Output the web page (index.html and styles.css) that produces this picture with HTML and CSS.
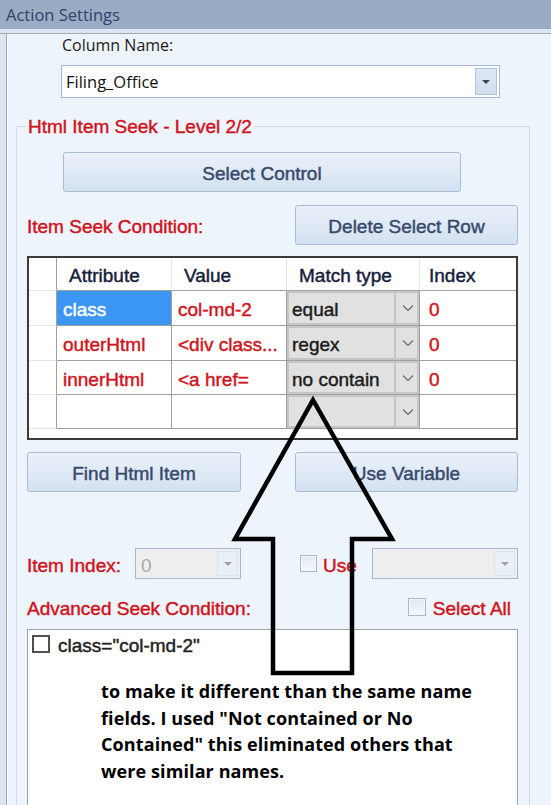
FILE: index.html
```html
<!DOCTYPE html>
<html>
<head>
<meta charset="utf-8">
<link rel="stylesheet" href="styles.css">
</head>
<body>
<div class="window">
  <div class="titlebar">Action Settings</div>
  <div class="titlesep"></div>
  <div class="frame">
    <div class="frame-edge"></div>
    <div class="content">
      <div class="field-label">Column Name:</div>
      <div class="combo">
        <div class="combo-text">Filing_Office</div>
        <div class="combo-btn"><span class="tri"></span></div>
      </div>

      <div class="group">
        <div class="legend-row"><span class="legend ui red">Html Item Seek - Level 2/2</span></div>

        <div class="btn ui select-btn">Select Control</div>

        <div class="seek-row">
          <div class="ui red lbl">Item Seek Condition:</div>
          <div class="btn ui del-btn">Delete Select Row</div>
        </div>

        <div class="grid ui">
          <div class="rh"></div>
          <div class="th">Attribute</div>
          <div class="th">Value</div>
          <div class="th">Match type</div>
          <div class="th last">Index</div>

          <div class="rh"></div>
          <div class="td sel">class</div>
          <div class="td">col-md-2</div>
          <div class="td mc"><span class="mc-text">equal</span><span class="mc-btn"><svg width="12" height="8" viewBox="0 0 12 8"><polyline points="1,1.5 6,6.5 11,1.5" fill="none" stroke="#6a6a6a" stroke-width="1.2"/></svg></span></div>
          <div class="td last">0</div>

          <div class="rh"></div>
          <div class="td">outerHtml</div>
          <div class="td">&lt;div class...</div>
          <div class="td mc"><span class="mc-text">regex</span><span class="mc-btn"><svg width="12" height="8" viewBox="0 0 12 8"><polyline points="1,1.5 6,6.5 11,1.5" fill="none" stroke="#6a6a6a" stroke-width="1.2"/></svg></span></div>
          <div class="td last">0</div>

          <div class="rh"></div>
          <div class="td">innerHtml</div>
          <div class="td">&lt;a href=</div>
          <div class="td mc"><span class="mc-text">no contain</span><span class="mc-btn"><svg width="12" height="8" viewBox="0 0 12 8"><polyline points="1,1.5 6,6.5 11,1.5" fill="none" stroke="#6a6a6a" stroke-width="1.2"/></svg></span></div>
          <div class="td last">0</div>

          <div class="rh"></div>
          <div class="td"></div>
          <div class="td"></div>
          <div class="td mc"><span class="mc-text"></span><span class="mc-btn"><svg width="12" height="8" viewBox="0 0 12 8"><polyline points="1,1.5 6,6.5 11,1.5" fill="none" stroke="#6a6a6a" stroke-width="1.2"/></svg></span></div>
          <div class="td last"></div>

          <div class="filler"></div>
        </div>

        <div class="btn-row">
          <div class="btn ui find-btn">Find Html Item</div>
          <div class="btn ui var-btn">Use Variable</div>
        </div>

        <div class="idx-row">
          <div class="ui red lbl idx-label">Item Index:</div>
          <div class="dcombo idx-combo">
            <span class="dcombo-text ui">0</span>
            <span class="dcombo-btn"><span class="tri gray"></span></span>
          </div>
          <span class="chk use-chk"></span>
          <span class="ui red lbl use-label">Use</span>
          <div class="dcombo var-combo">
            <span class="dcombo-text ui"></span>
            <span class="dcombo-btn"><span class="tri gray"></span></span>
          </div>
        </div>

        <div class="adv-row">
          <div class="ui red lbl">Advanced Seek Condition:</div>
          <div class="selall">
            <span class="chk"></span>
            <span class="ui red lbl">Select All</span>
          </div>
        </div>

        <div class="listbox">
          <div class="list-item">
            <span class="lchk"></span>
            <span class="ui lbl list-text">class="col-md-2"</span>
          </div>
        </div>
      </div>
    </div>
  </div>

  <svg class="arrow" width="551" height="805" viewBox="0 0 551 805">
    <polygon points="313,400 392,539 352,539 352,673 273,673 273,539 235,539" fill="none" stroke="#000" stroke-width="4.5" stroke-linejoin="miter"/>
  </svg>

  <div class="note">to make it different than the same name<br>fields. I used "Not contained or No<br>Contained" this eliminated others that<br>were similar names.</div>
</div>
</body>
</html>
```

FILE: styles.css
```css
* { box-sizing: border-box; }

body {
  margin: 0;
  background: #eef4fc;
  font-family: "Liberation Sans", Arial, sans-serif;
  overflow: hidden;
}

.window {
  position: relative;
  width: 551px;
  height: 805px;
  overflow: hidden;
  background: #eef4fc;
}

.titlebar {
  height: 29px;
  background: #9aabc4;
  color: #31436a;
  font-family: "Open Sans", sans-serif;
  font-size: 16.5px;
  line-height: 30px;
  padding-left: 6px;
}

.titlesep {
  height: 5px;
  background: #dbe6f3;
  border-bottom: 1px solid #a6a9a5;
}

.frame {
  display: flex;
  height: 771px;
}

.frame-edge {
  width: 7px;
  background: #dce6f2;
  border-right: 1px solid #a0a5ab;
}

.content {
  flex: 1;
  border-left: 1px solid #fbfdff;
  padding-top: 1px;
}

.ui {
  font-family: "Liberation Sans", Arial, sans-serif;
  font-size: 19px;
  -webkit-text-stroke: 0.45px currentColor;
}

.lbl { padding-top: 4px; }

.red { color: #d0141c; }

.field-label {
  margin-left: 54px;
  font-family: "Open Sans", sans-serif;
  font-size: 16px;
  line-height: 20px;
  color: #1b1b1b;
}

.combo {
  margin: 10px 0 0 53px;
  width: 439px;
  height: 33px;
  border: 1px solid #a7b8d2;
  background: #fff;
  display: flex;
  align-items: center;
  padding: 2px;
}

.combo-text {
  flex: 1;
  padding-left: 2px;
  font-family: "Open Sans", sans-serif;
  font-size: 16.5px;
  color: #111;
}

.combo-btn {
  width: 22px;
  height: 27px;
  background: linear-gradient(#dde7f4, #d2deee);
  border: 1px solid #b3c3da;
  display: flex;
  align-items: center;
  justify-content: center;
}

.tri {
  width: 0;
  height: 0;
  border-left: 4px solid transparent;
  border-right: 4px solid transparent;
  border-top: 4px solid #444;
  margin-top: 1px;
}

.tri.gray { border-top-color: #a0a0a0; }

.group {
  margin: 28px 0 0 8px;
  width: 514px;
  height: 700px;
  border: 1px solid #d6dae0;
  border-bottom: none;
  padding: 0 11px 0 10px;
}

.legend-row {
  height: 20px;
  margin-top: -11px;
  line-height: 22px;
}

.legend {
  background: #eef4fc;
  padding: 0 2px;
  margin-left: -1px;
}

.btn {
  height: 40px;
  border: 1px solid #a9bcd6;
  border-radius: 3px;
  background: linear-gradient(#ebf1fa, #d4e1f1);
  color: #384a6c;
  display: flex;
  align-items: center;
  justify-content: center;
  padding-top: 4px;
}

.select-btn {
  margin: 16px 0 0 36px;
  width: 398px;
}

.seek-row {
  display: flex;
  justify-content: space-between;
  align-items: center;
  margin-top: 13px;
}

.del-btn { width: 223px; }

.grid {
  margin-top: 11px;
  display: grid;
  grid-template-columns: 28px 115px 115px 133px 96px;
  grid-template-rows: 33px 35px 35px 34px 34px 9px;
  border: 2px solid #3a3a3a;
  background: #fff;
}

.rh {
  border-right: 1px solid #a0a0a0;
  border-bottom: 1px solid #e3e3e3;
}

.th {
  border-right: 1px solid #e3e3e3;
  border-bottom: 1px solid #a0a0a0;
  color: #15203a;
  padding: 4px 0 0 12px;
  display: flex;
  align-items: center;
}

.td {
  border-right: 1px solid #a0a0a0;
  border-bottom: 1px solid #a0a0a0;
  color: #d0141c;
  padding: 4px 0 0 6px;
  display: flex;
  align-items: center;
  white-space: nowrap;
  overflow: hidden;
}

.th.last, .td.last { border-right: none; padding-left: 9px; }

.td.sel {
  background: #3b97f3;
  color: #fff;
}

.td.mc {
  padding: 0;
  background: #e1e1e1;
  box-shadow: inset 0 0 0 2px #c6c6c6;
  color: #1c1c1c;
}

.mc-text {
  flex: 1;
  padding: 4px 0 0 5px;
}

.mc-btn {
  width: 25px;
  align-self: stretch;
  border-left: 2px solid #c6c6c6;
  display: flex;
  align-items: center;
  justify-content: center;
}

.filler { grid-column: 1 / -1; }

.btn-row {
  display: flex;
  justify-content: space-between;
  margin-top: 12px;
}

.find-btn { width: 214px; }
.var-btn { width: 223px; }

.idx-row {
  display: flex;
  align-items: center;
  margin-top: 56px;
  height: 31px;
}

.idx-label { width: 108px; }

.dcombo {
  height: 31px;
  border: 1px solid #a7b7cf;
  background: #efefef;
  display: flex;
  align-items: center;
  padding: 2px;
}

.dcombo-text {
  flex: 1;
  color: #a9a9a9;
  padding: 4px 0 0 3px;
  -webkit-text-stroke: 0;
}

.dcombo-btn {
  width: 21px;
  height: 25px;
  background: #eaf0f7;
  border: 1px solid #dbe3ee;
  display: flex;
  align-items: center;
  justify-content: center;
}

.idx-combo { width: 106px; }

.chk {
  width: 17px;
  height: 17px;
  border: 1px solid #a7b8d0;
  background: linear-gradient(#e2e8f0, #f6f9fc);
  box-shadow: inset 0 0 0 1px #f4f6f9;
  display: inline-block;
}

.use-chk { margin-left: 59px; }
.use-label { margin-left: 6px; }
.var-combo { width: 146px; margin-left: auto; }

.adv-row {
  display: flex;
  justify-content: space-between;
  align-items: center;
  margin-top: 17px;
  height: 21px;
}

.selall {
  display: flex;
  align-items: center;
  gap: 7px;
  margin-right: 7px;
}

.selall .chk { width: 18px; height: 18px; }

.listbox {
  margin-top: 12px;
  height: 200px;
  border: 1px solid #9da3ab;
  background: #fff;
  padding: 5px 4px;
}

.list-item {
  display: flex;
  align-items: center;
  height: 18px;
}

.lchk {
  width: 18px;
  height: 18px;
  border: 2px solid #505050;
  background: #fff;
}

.list-text {
  margin-left: 8px;
  color: #222;
}

.arrow {
  position: absolute;
  left: 0;
  top: 0;
  pointer-events: none;
}

.note {
  position: absolute;
  left: 101px;
  top: 678px;
  font-family: "Open Sans", sans-serif;
  font-weight: 700;
  font-size: 18px;
  line-height: 26.7px;
  letter-spacing: 0.1px;
  color: #000;
  white-space: nowrap;
}
```
